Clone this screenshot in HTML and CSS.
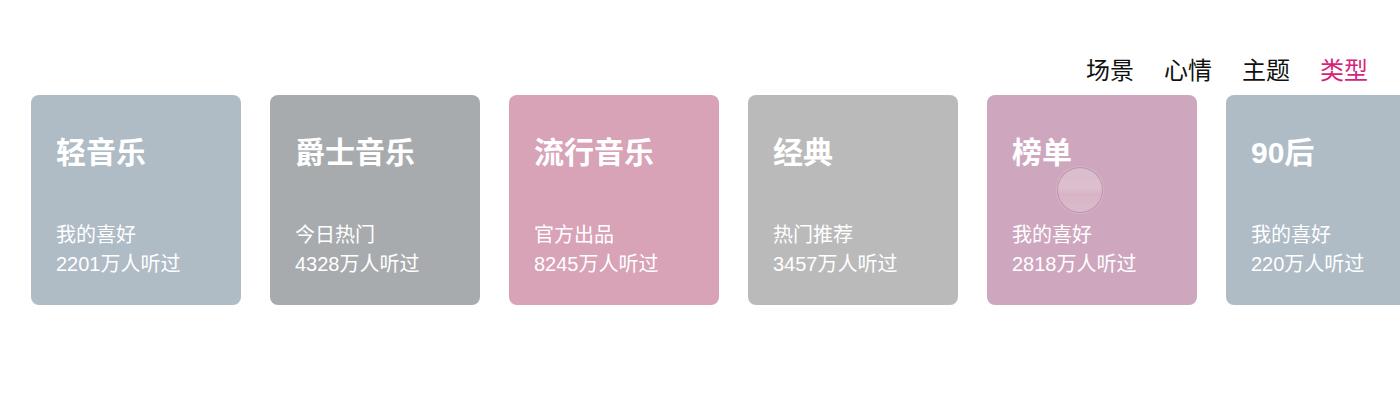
FILE: index.html
```html
<!DOCTYPE html>
<html lang="zh-CN">
<head>
    <meta charset="UTF-8">
    <title>歌单分类</title>
    <link rel="stylesheet" href="styles.css">
</head>
<body>
    <div class="page">
        <!-- 分类标签 -->
        <nav class="tabs">
            <span class="tab">场景</span>
            <span class="tab">心情</span>
            <span class="tab">主题</span>
            <span class="tab active">类型</span>
        </nav>

        <!-- 歌单卡片 -->
        <div class="cards">
            <div class="card card-slate">
                <h3>轻音乐</h3>
                <p>我的喜好<br>2201万人听过</p>
            </div>
            <div class="card card-grey">
                <h3>爵士音乐</h3>
                <p>今日热门<br>4328万人听过</p>
            </div>
            <div class="card card-rose">
                <h3>流行音乐</h3>
                <p>官方出品<br>8245万人听过</p>
            </div>
            <div class="card card-silver">
                <h3>经典</h3>
                <p>热门推荐<br>3457万人听过</p>
            </div>
            <div class="card card-mauve">
                <h3>榜单</h3>
                <p>我的喜好<br>2818万人听过</p>
                <span class="touch"></span>
            </div>
            <div class="card card-slate">
                <h3>90后</h3>
                <p>我的喜好<br>220万人听过</p>
            </div>
        </div>
    </div>
</body>
</html>
```

FILE: styles.css
```css
/* --- 颜色 --- */
:root {
    --color-text: #111111;
    --color-active: #d6237a;
    --card-slate: #afbbc5;
    --card-grey: #a7abae;
    --card-rose: #d8a2b7;
    --card-silver: #bababa;
    --card-mauve: #cea7bf;
}

body {
    margin: 0;
    background: #ffffff;
    font-family: "Liberation Sans", "Noto Sans CJK SC", sans-serif;
    color: var(--color-text);
    overflow: hidden;
}

.page {
    width: 1400px;
    height: 400px;
    overflow: hidden;
}

/* --- 标签 --- */
.tabs {
    display: flex;
    justify-content: flex-end;
    gap: 30px;
    padding: 54px 32px 0 0;
    margin-bottom: 7px;
}

.tab {
    font-size: 24px;
    line-height: 34px;
}

.tab.active {
    color: var(--color-active);
}

/* --- 卡片 --- */
.cards {
    display: flex;
    gap: 29px;
    padding-left: 31px;
}

.card {
    position: relative;
    flex: 0 0 210px;
    height: 210px;
    box-sizing: border-box;
    padding: 40px 25px 0;
    border-radius: 8px;
    color: #ffffff;
}

.card h3 {
    margin: 0;
    font-size: 30px;
    line-height: 36px;
    font-weight: 700;
}

.card p {
    margin: 50px 0 0;
    font-size: 20px;
    line-height: 29px;
}

.card-slate { background: var(--card-slate); }
.card-grey { background: var(--card-grey); }
.card-rose { background: var(--card-rose); }
.card-silver { background: var(--card-silver); }
.card-mauve { background: var(--card-mauve); }

/* 触摸点 */
.touch {
    position: absolute;
    left: 70px;
    top: 72px;
    width: 44px;
    height: 44px;
    border-radius: 50%;
    border: 1px solid rgba(170, 120, 150, 0.55);
    background: linear-gradient(#d9bccd, #dcc0cf 45%, #d8b3c6 60%, #d9bccd);
    box-shadow: 0 0 2px rgba(255, 255, 255, 0.5);
}
```
